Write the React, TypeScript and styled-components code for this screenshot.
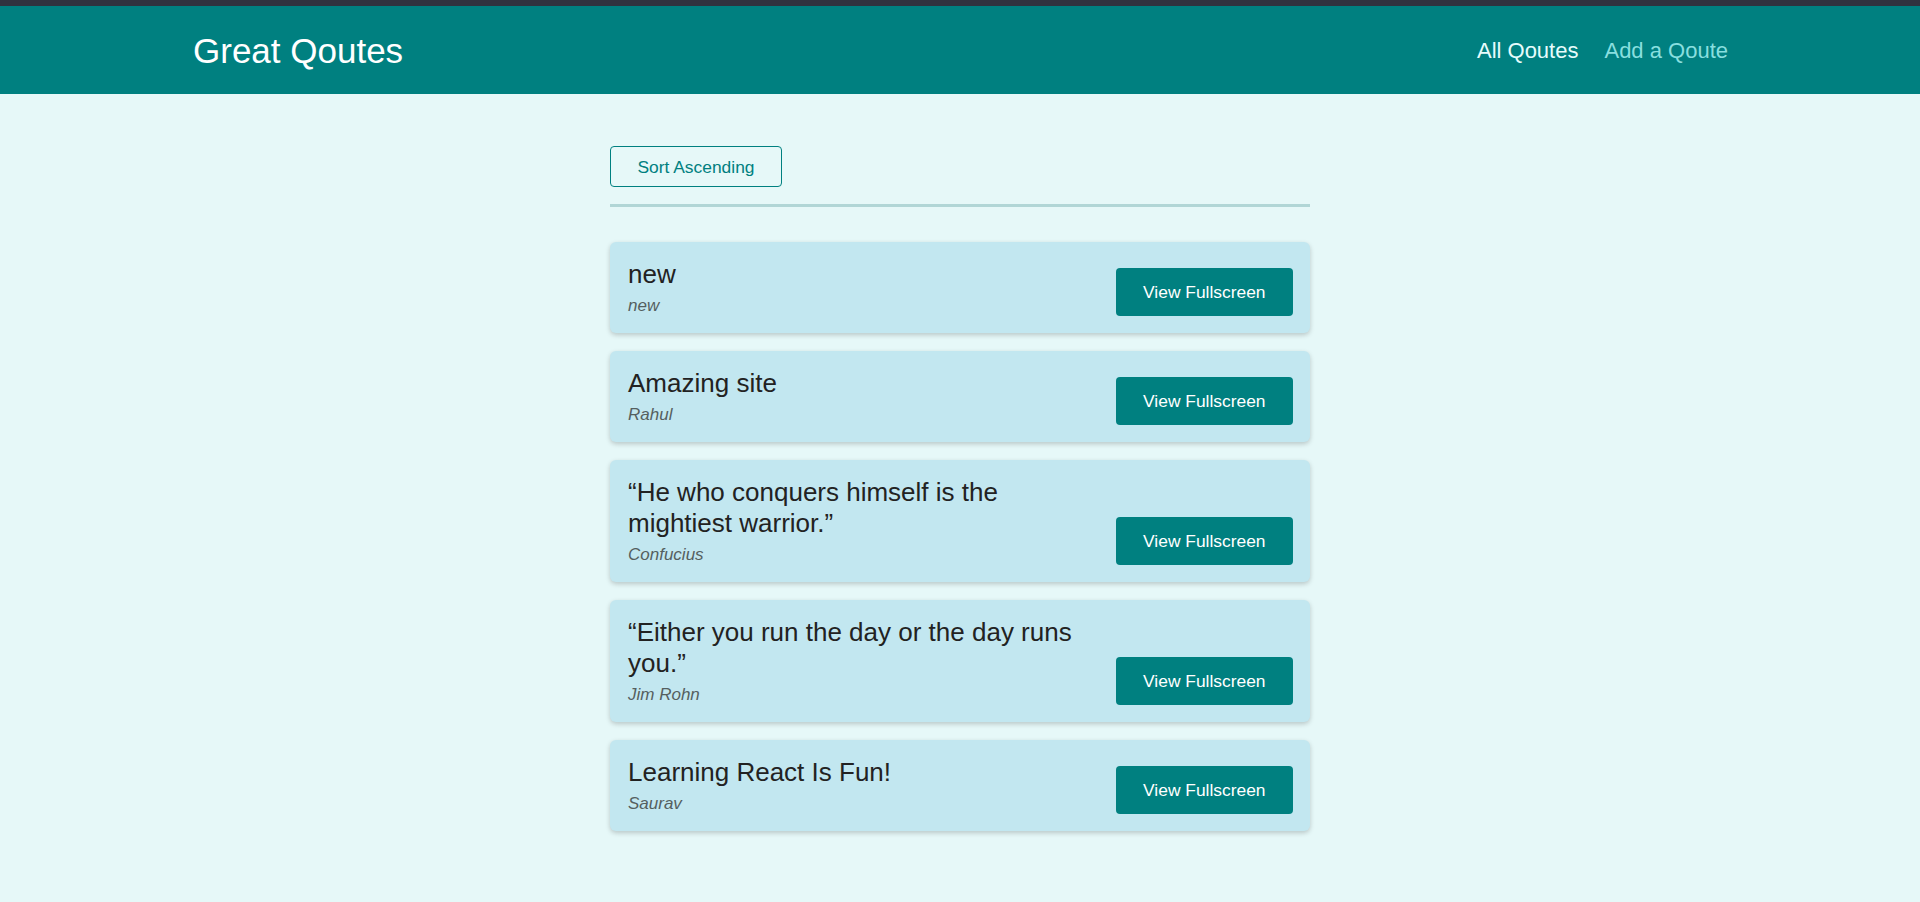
import React from "react";
import styled, { createGlobalStyle } from "styled-components";

const GlobalStyle = createGlobalStyle`
  html, body {
    margin: 0;
    padding: 0;
    background: #e6f8f8;
    font-family: "Liberation Sans", Arial, sans-serif;
  }
  * { box-sizing: border-box; }
`;

const TopStrip = styled.div`
  height: 6px;
  background: #30333f;
`;

const Header = styled.header`
  height: 88px;
  background: #008080;
  display: flex;
  align-items: center;
  justify-content: space-between;
  padding: 0 192px 0 193px;
`;

const Logo = styled.div`
  color: #ffffff;
  font-size: 35px;
  line-height: 1;
`;

const Nav = styled.nav`
  display: flex;
  gap: 26px;
  padding-top: 2px;
`;

const NavLink = styled.a<{ $active?: boolean }>`
  font-size: 22px;
  color: ${(p) => (p.$active ? "#e6fcfc" : "#88dfdf")};
  text-decoration: none;
  cursor: pointer;
`;

const Main = styled.main`
  width: 700px;
  margin: 0 auto;
  padding: 52px 0 40px;
`;

const Sorting = styled.div`
  padding-bottom: 17px;
  border-bottom: 3px solid #b1d6d6;
  margin-bottom: 35px;
`;

const SortButton = styled.button`
  font-family: "Liberation Sans", Arial, sans-serif;
  font-size: 17.4px;
  line-height: 20px;
  color: #008080;
  background: transparent;
  border: 1px solid #008080;
  border-radius: 4px;
  padding: 9.5px 26.5px;
  cursor: pointer;
  display: block;
`;

const List = styled.ul`
  list-style: none;
  margin: 0;
  padding: 0;
  display: flex;
  flex-direction: column;
  gap: 18px;
`;

const Card = styled.li`
  background: #c2e7f0;
  border-radius: 6px;
  box-shadow: 0 2px 5px rgba(0, 0, 0, 0.2);
  padding: 17px 17px 17px 18px;
  display: flex;
  justify-content: space-between;
  align-items: flex-end;
  gap: 20px;
`;

const Figure = styled.figure`
  margin: 0;
  width: 462px;
`;

const Quote = styled.blockquote`
  margin: 0;
  font-size: 26px;
  line-height: 31px;
  color: #222222;
`;

const Author = styled.figcaption`
  margin-top: 6px;
  font-size: 17px;
  line-height: 20px;
  font-style: italic;
  color: #555f5f;
`;

const ViewButton = styled.a`
  flex-shrink: 0;
  display: block;
  background: #008080;
  color: #ffffff;
  font-size: 17.4px;
  line-height: 20px;
  padding: 14px 27.5px;
  border-radius: 4px;
  text-decoration: none;
  cursor: pointer;
`;

const quotes = [
  { id: 1, text: "new", author: "new" },
  { id: 2, text: "Amazing site", author: "Rahul" },
  { id: 3, text: "\u201CHe who conquers himself is the mightiest warrior.\u201D", author: "Confucius" },
  { id: 4, text: "\u201CEither you run the day or the day runs you.\u201D", author: "Jim Rohn" },
  { id: 5, text: "Learning React Is Fun!", author: "Saurav" },
];

export default function App() {
  return (
    <>
      <GlobalStyle />
      <TopStrip />
      <Header>
        <Logo>Great Qoutes</Logo>
        <Nav>
          <NavLink $active>All Qoutes</NavLink>
          <NavLink>Add a Qoute</NavLink>
        </Nav>
      </Header>
      <Main>
        <Sorting>
          <SortButton>Sort Ascending</SortButton>
        </Sorting>
        <List>
          {quotes.map((q) => (
            <Card key={q.id}>
              <Figure>
                <Quote>{q.text}</Quote>
                <Author>{q.author}</Author>
              </Figure>
              <ViewButton>View Fullscreen</ViewButton>
            </Card>
          ))}
        </List>
      </Main>
    </>
  );
}
